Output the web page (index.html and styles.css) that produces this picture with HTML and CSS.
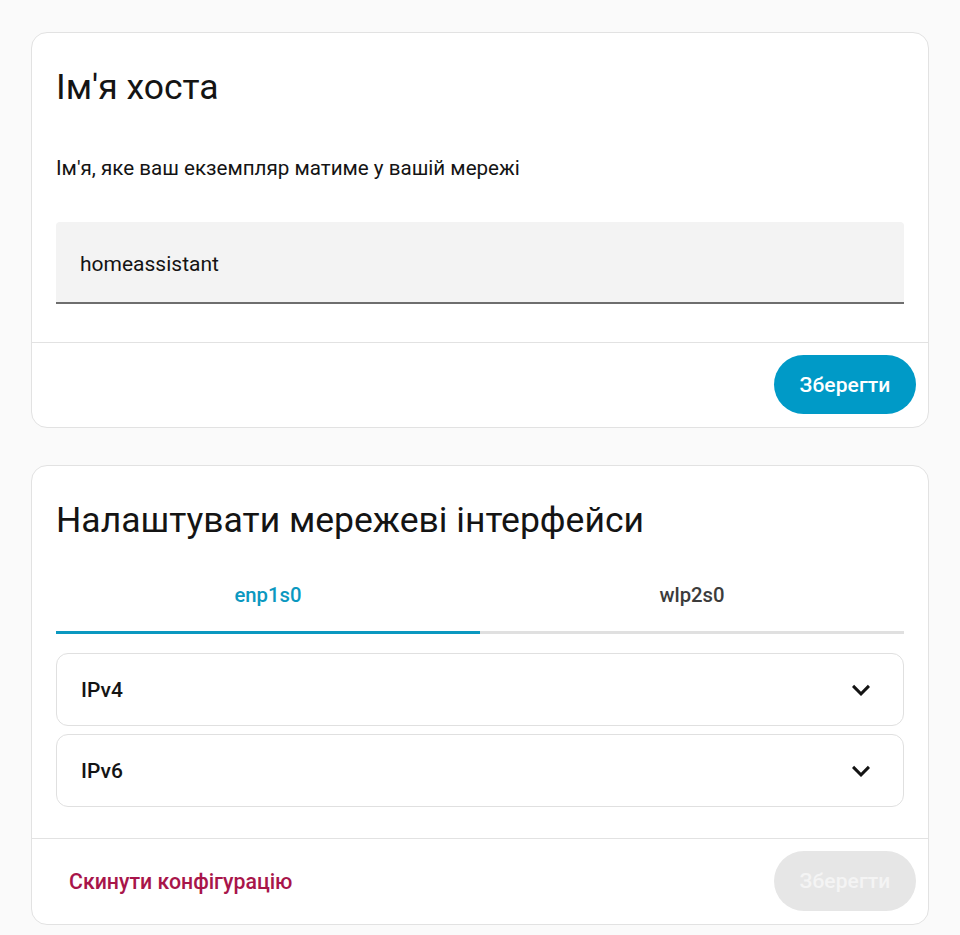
FILE: index.html
```html
<!DOCTYPE html>
<html lang="uk">
<head>
<meta charset="utf-8">
<link rel="stylesheet" href="styles.css">
</head>
<body>
<main class="page">
  <section class="card">
    <h1 class="card-title">Ім'я хоста</h1>
    <div class="card-content">
      <p class="desc">Ім'я, яке ваш екземпляр матиме у вашій мережі</p>
      <div class="textfield">homeassistant</div>
    </div>
    <div class="card-actions">
      <button class="btn-primary">Зберегти</button>
    </div>
  </section>

  <section class="card">
    <h1 class="card-title">Налаштувати мережеві інтерфейси</h1>
    <div class="card-content">
      <div class="tabs">
        <div class="tab active">enp1s0</div>
        <div class="tab">wlp2s0</div>
      </div>
      <div class="panel">
        <span class="panel-label">IPv4</span>
        <svg class="chevron" viewBox="0 0 24 24"><path d="M7.41,8.58L12,13.17L16.59,8.58L18,10L12,16L6,10L7.41,8.58Z"/></svg>
      </div>
      <div class="panel">
        <span class="panel-label">IPv6</span>
        <svg class="chevron" viewBox="0 0 24 24"><path d="M7.41,8.58L12,13.17L16.59,8.58L18,10L12,16L6,10L7.41,8.58Z"/></svg>
      </div>
    </div>
    <div class="card-actions spread">
      <button class="btn-text">Скинути конфігурацію</button>
      <button class="btn-primary disabled">Зберегти</button>
    </div>
  </section>
</main>
</body>
</html>
```

FILE: styles.css
```css
* { box-sizing: border-box; }
html, body { margin: 0; padding: 0; }
body {
  background: #fafafa;
  font-family: Roboto, "Noto Sans", "Liberation Sans", sans-serif;
  color: #141414;
}
.page {
  padding: 32px 31px 0 31px;
  display: flex;
  flex-direction: column;
  gap: 37px;
}
.card {
  background: #fff;
  border: 1px solid #e2e2e2;
  border-radius: 16px;
  overflow: hidden;
}
.card-title {
  margin: 0;
  padding: 30px 24px 0 24px;
  font-size: 35.5px;
  line-height: 48px;
  font-weight: 400;
  color: #141414;
}
.card-content {
  padding: 0 24px;
}
.desc {
  margin: 43px 0 0 0;
  font-size: 20.6px;
  line-height: 28px;
  color: #141414;
}
.textfield {
  margin-top: 40px;
  height: 82px;
  background: #f3f3f3;
  border-bottom: 2px solid #6e6e6e;
  border-radius: 4px 4px 0 0;
  padding: 4px 24px 0 24px;
  display: flex;
  align-items: center;
  font-size: 21px;
  color: #141414;
}
.card:first-child .card-content { padding-bottom: 38px; }
.card-actions {
  border-top: 1px solid #e2e2e2;
  padding: 12px 12px 13px 12px;
  display: flex;
  justify-content: flex-end;
  align-items: center;
}
.card-actions.spread { justify-content: space-between; }
.btn-primary {
  font-family: inherit;
  border: none;
  background: #009ac7;
  color: #fff;
  font-size: 21px;
  font-weight: 500;
  height: 59px;
  width: 142px;
  border-radius: 30px;
  padding: 0;
  letter-spacing: 0.1px;
}
.btn-primary.disabled {
  background: #e6e6e6;
  color: #f4f4f4;
  height: 60px;
}
.btn-text {
  font-family: inherit;
  border: none;
  background: transparent;
  color: #a8154a;
  font-size: 21.3px;
  font-weight: 500;
  padding: 0 25px;
  height: 60px;
}
.tabs {
  margin-top: 12px;
  display: flex;
}
.tab {
  flex: 1;
  text-align: center;
  font-size: 20.3px;
  font-weight: 500;
  line-height: 28px;
  padding: 25px 0 22px 0;
  border-bottom: 3px solid #e0e0e0;
  color: #3c3c3c;
}
.tab.active {
  color: #0b98c0;
  border-bottom-color: #0b98c0;
}
.panel {
  margin-top: 8px;
  height: 73px;
  border: 1px solid #e0e0e0;
  border-radius: 12px;
  display: flex;
  align-items: center;
  justify-content: space-between;
  padding: 0 24px 0 24px;
}
.tabs + .panel { margin-top: 19px; }
.card:last-child .card-content { padding-bottom: 31px; }
.panel-label {
  font-size: 21px;
  font-weight: 500;
  color: #141414;
}
.chevron {
  width: 36px;
  height: 36px;
  fill: #141414;
}
```
